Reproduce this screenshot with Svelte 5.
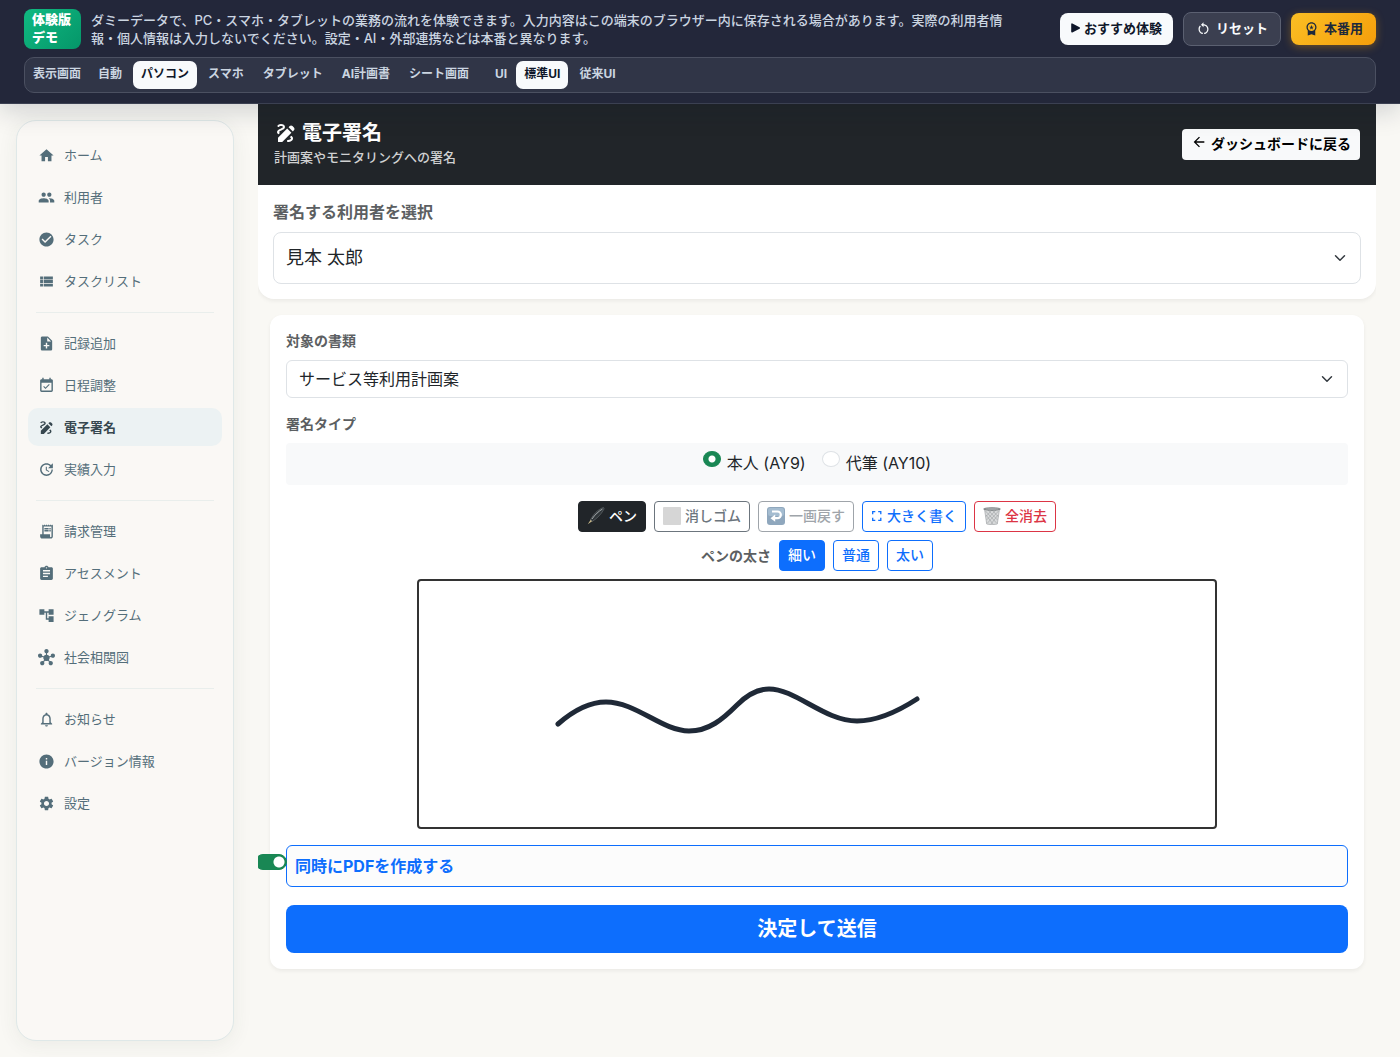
<script>
	const icons = {
		home: 'M10 20v-6h4v6h5v-8h3L12 3 2 12h3v8z',
		group:
			'M16 11c1.66 0 2.99-1.34 2.99-3S17.66 5 16 5c-1.66 0-3 1.34-3 3s1.34 3 3 3zm-8 0c1.66 0 2.99-1.34 2.99-3S9.66 5 8 5C6.34 5 5 6.34 5 8s1.34 3 3 3zm0 2c-2.33 0-7 1.17-7 3.5V19h14v-2.5c0-2.33-4.67-3.5-7-3.5zm8 0c-.29 0-.62.02-.97.05 1.16.84 1.97 1.97 1.97 3.45V19h6v-2.5c0-2.33-4.67-3.5-7-3.5z',
		check:
			'M12 2C6.48 2 2 6.48 2 12s4.48 10 10 10 10-4.48 10-10S17.52 2 12 2zm-2 15l-5-5 1.41-1.41L10 14.17l7.59-7.59L19 8l-9 9z',
		list: 'M3 14h4v-4H3v4zm0 5h4v-4H3v4zM3 9h4V5H3v4zm5 5h13v-4H8v4zm0 5h13v-4H8v4zM8 5v4h13V5H8z',
		note:
			'M14 2H6c-1.1 0-1.99.9-1.99 2L4 20c0 1.1.89 2 1.99 2H18c1.1 0 2-.9 2-2V8l-6-6zm2 14h-3v3h-2v-3H8v-2h3v-3h2v3h3v2zm-3-7V3.5L18.5 9H13z',
		event:
			'M16.53 11.06L15.47 10l-4.88 4.88-2.12-2.12-1.06 1.06L10.59 17l5.94-5.94zM19 3h-1V1h-2v2H8V1H6v2H5c-1.11 0-1.99.9-1.99 2L3 19c0 1.1.89 2 2 2h14c1.1 0 2-.9 2-2V5c0-1.1-.9-2-2-2zm0 16H5V8h14v11z',
		draw:
			'M18.85 10.39l1.06-1.06c.78-.78.78-2.05 0-2.83L18.5 5.09c-.78-.78-2.05-.78-2.83 0l-1.06 1.06 4.24 4.24zm-5.66-2.83L4 16.76V21h4.24l9.19-9.19-4.24-4.25zM19 17.5c0 2.19-2.54 3.5-5 3.5-.55 0-1-.45-1-1s.45-1 1-1c1.54 0 3-.73 3-1.5 0-.47-.48-.87-1.23-1.2l1.48-1.48c1.07.63 1.75 1.47 1.75 2.68zM4.58 13.35C3.61 12.79 3 12.06 3 11c0-1.8 1.89-2.63 3.56-3.36C7.59 7.18 9 6.56 9 6c0-.41-.78-1-2-1-1.26 0-1.8.61-1.83.64-.35.41-.98.46-1.4.12-.41-.34-.49-.95-.15-1.38C3.73 4.24 4.76 3 7 3s4 1.32 4 3c0 1.87-1.93 2.72-3.64 3.47C6.42 9.88 5 10.5 5 11c0 .31.43.6 1.07.86l-1.49 1.49z',
		update:
			'M21 10.12h-6.78l2.74-2.82c-2.73-2.7-7.15-2.8-9.88-.1-2.73 2.71-2.73 7.08 0 9.79s7.15 2.71 9.88 0C18.32 15.65 19 14.08 19 12.1h2c0 1.98-.88 4.55-2.64 6.29-3.51 3.48-9.21 3.48-12.72 0-3.5-3.47-3.53-9.11-.02-12.58s9.14-3.47 12.65 0L21 3v7.12zM12.5 8v4.25l3.5 2.08-.72 1.21L11 13V8h1.5z',
		receipt:
			'M19.5 3.5L18 2l-1.5 1.5L15 2l-1.5 1.5L12 2l-1.5 1.5L9 2 7.5 3.5 6 2v14H3v3c0 1.66 1.34 3 3 3h12c1.66 0 3-1.34 3-3V2l-1.5 1.5zM19 19c0 .55-.45 1-1 1s-1-.45-1-1v-3H8V5h11v14zM9 7h6v2H9zM16 7h2v2h-2zM9 10h6v2H9zM16 10h2v2h-2z',
		assignment:
			'M19 3h-4.18C14.4 1.84 13.3 1 12 1c-1.3 0-2.4.84-2.82 2H5c-1.1 0-2 .9-2 2v14c0 1.1.9 2 2 2h14c1.1 0 2-.9 2-2V5c0-1.1-.9-2-2-2zm-7 0c.55 0 1 .45 1 1s-.45 1-1 1-1-.45-1-1 .45-1 1-1zm2 14H7v-2h7v2zm3-4H7v-2h10v2zm0-4H7V7h10v2z',
		tree: 'M22 11V3h-7v3H9V3H2v8h7V8h2v10h4v3h7v-8h-7v3h-2V8h2v3z',
		hub:
			'M8.4 18.2C8.78 18.7 9 19.32 9 20c0 1.66-1.34 3-3 3s-3-1.34-3-3 1.34-3 3-3c.44 0 .85.09 1.23.26l1.41-1.77c-.92-1.03-1.29-2.39-1.09-3.69l-2.03-.68C4.98 11.95 4.06 12.5 3 12.5c-1.66 0-3-1.34-3-3s1.34-3 3-3 3 1.34 3 3c0 .07 0 .14-.01.21l2.03.68c.64-1.21 1.82-2.09 3.22-2.32V5.91C9.96 5.57 9 4.4 9 3c0-1.66 1.34-3 3-3s3 1.34 3 3c0 1.4-.96 2.57-2.25 2.91v2.16c1.4.23 2.58 1.11 3.22 2.32l2.03-.68C18 9.64 18 9.57 18 9.5c0-1.66 1.34-3 3-3s3 1.34 3 3-1.34 3-3 3c-1.06 0-1.98-.55-2.52-1.37l-2.03.68c.2 1.29-.16 2.65-1.09 3.69l1.41 1.77C17.15 17.09 17.56 17 18 17c1.66 0 3 1.34 3 3s-1.34 3-3 3-3-1.34-3-3c0-.68.22-1.3.6-1.8l-1.41-1.77c-1.35.75-3.01.76-4.37 0L8.4 18.2z',
		bell:
			'M12 22c1.1 0 2-.9 2-2h-4c0 1.1.89 2 2 2zm6-6v-5c0-3.07-1.64-5.64-4.5-6.32V4c0-.83-.67-1.5-1.5-1.5s-1.5.67-1.5 1.5v.68C7.63 5.36 6 7.92 6 11v5l-2 2v1h16v-1l-2-2zm-2 1H8v-6c0-2.48 1.51-4.5 4-4.5s4 2.02 4 4.5v6z',
		info:
			'M12 2C6.48 2 2 6.48 2 12s4.48 10 10 10 10-4.48 10-10S17.52 2 12 2zm1 15h-2v-6h2v6zm0-8h-2V7h2v2z',
		settings:
			'M19.14 12.94c.04-.3.06-.61.06-.94 0-.32-.02-.64-.07-.94l2.03-1.58c.18-.14.23-.41.12-.61l-1.92-3.32c-.12-.22-.37-.29-.59-.22l-2.39.96c-.5-.38-1.03-.7-1.62-.94l-.36-2.54c-.04-.24-.24-.41-.48-.41h-3.84c-.24 0-.43.17-.47.41l-.36 2.54c-.59.24-1.13.57-1.62.94l-2.39-.96c-.22-.08-.47 0-.59.22L2.74 8.87c-.12.21-.08.47.12.61l2.03 1.58c-.05.3-.09.63-.09.94s.02.64.07.94l-2.03 1.58c-.18.14-.23.41-.12.61l1.92 3.32c.12.22.37.29.59.22l2.39-.96c.5.38 1.03.7 1.62.94l.36 2.54c.05.24.24.41.48.41h3.84c.24 0 .44-.17.47-.41l.36-2.54c.59-.24 1.13-.56 1.62-.94l2.39.96c.22.08.47 0 .59-.22l1.92-3.32c.12-.22.07-.47-.12-.61l-2.01-1.58zM12 15.6c-1.98 0-3.6-1.62-3.6-3.6s1.62-3.6 3.6-3.6 3.6 1.62 3.6 3.6-1.62 3.6-3.6 3.6z',
		restart:
			'M12 5V2L8 6l4 4V7c3.31 0 6 2.69 6 6 0 2.97-2.17 5.43-5 5.91v2.02c3.95-.49 7-3.85 7-7.93 0-4.42-3.58-8-8-8zm-6 8c0-1.65.67-3.15 1.76-4.24L6.34 7.34C4.9 8.79 4 10.79 4 13c0 4.08 3.05 7.44 7 7.93v-2.02c-2.83-.48-5-2.94-5-5.91z',
		premium:
			'M9.68 13.69L12 11.93l2.31 1.76-.88-2.85L15.75 9h-2.84L12 6.19 11.09 9H8.25l2.31 1.84-.88 2.85zM20 10c0-4.42-3.58-8-8-8s-8 3.58-8 8c0 2.03.76 3.87 2 5.28V23l6-2 6 2v-7.72c1.24-1.41 2-3.25 2-5.28zm-8-6c3.31 0 6 2.69 6 6s-2.69 6-6 6-6-2.69-6-6 2.69-6 6-6z',
		back: 'M20 11H7.83l5.59-5.59L12 4l-8 8 8 8 1.41-1.41L7.83 13H20v-2z'
	};

	const navGroups = [
		[
			{ icon: 'home', label: 'ホーム' },
			{ icon: 'group', label: '利用者' },
			{ icon: 'check', label: 'タスク' },
			{ icon: 'list', label: 'タスクリスト' }
		],
		[
			{ icon: 'note', label: '記録追加' },
			{ icon: 'event', label: '日程調整' },
			{ icon: 'draw', label: '電子署名' },
			{ icon: 'update', label: '実績入力' }
		],
		[
			{ icon: 'receipt', label: '請求管理' },
			{ icon: 'assignment', label: 'アセスメント' },
			{ icon: 'tree', label: 'ジェノグラム' },
			{ icon: 'hub', label: '社会相関図' }
		],
		[
			{ icon: 'bell', label: 'お知らせ' },
			{ icon: 'info', label: 'バージョン情報' },
			{ icon: 'settings', label: '設定' }
		]
	];

	const screens = ['自動', 'パソコン', 'スマホ', 'タブレット', 'AI計画書', 'シート画面'];
	const uis = ['標準UI', '従来UI'];
	const widths = ['細い', '普通', '太い'];

	let page = $state('電子署名');
	let screen = $state('パソコン');
	let ui = $state('標準UI');
	let tool = $state('pen');
	let width = $state('細い');
	let signer = $state('AY9');
	let makePdf = $state(true);
</script>

{#snippet icon(name)}
	<svg class="icon" viewBox="0 0 24 24" aria-hidden="true"><path d={icons[name]} /></svg>
{/snippet}

<header class="demo-bar">
	<div class="demo-bar__top">
		<strong class="demo-bar__badge">体験版<br />デモ</strong>
		<p class="demo-bar__text">
			ダミーデータで、PC・スマホ・タブレットの業務の流れを体験できます。入力内容はこの端末のブラウザー内に保存される場合があります。実際の利用者情報・個人情報は入力しないでください。設定・AI・外部連携などは本番と異なります。
		</p>
		<div class="demo-bar__actions">
			<button class="demo-button demo-button--tour">
				<svg class="play" viewBox="0 0 9 10" aria-hidden="true">
					<path d="M1 1.2v7.6L8.2 5z" stroke-width="1.6" stroke-linejoin="round" />
				</svg>
				おすすめ体験
			</button>
			<button class="demo-button demo-button--reset">{@render icon('restart')}リセット</button>
			<button class="demo-button demo-button--live">{@render icon('premium')}本番用</button>
		</div>
	</div>
	<div class="tabs">
		<span class="tabs__label">表示画面</span>
		{#each screens as name}
			<button class="tab" class:active={screen === name} onclick={() => (screen = name)}>{name}</button>
		{/each}
		<span class="tabs__label tabs__label--ui">UI</span>
		{#each uis as name}
			<button class="tab" class:active={ui === name} onclick={() => (ui = name)}>{name}</button>
		{/each}
	</div>
</header>

<div class="layout">
	<nav class="sidebar">
		{#each navGroups as group, i}
			{#if i > 0}<hr />{/if}
			{#each group as item}
				<a
					class="nav-link"
					class:active={page === item.label}
					href="#{item.icon}"
					onclick={() => (page = item.label)}
				>
					{@render icon(item.icon)}{item.label}
				</a>
			{/each}
		{/each}
	</nav>

	<main>
		<section class="client">
			<div class="client__header">
				<div>
					<h1>{@render icon('draw')}電子署名</h1>
					<p>計画案やモニタリングへの署名</p>
				</div>
				<a class="back" href="#dashboard">{@render icon('back')}ダッシュボードに戻る</a>
			</div>
			<div class="client__body">
				<label for="client">署名する利用者を選択</label>
				<select id="client" class="select select--large">
					<option>見本 太郎</option>
				</select>
			</div>
		</section>

		<form class="card" onsubmit={(event) => event.preventDefault()}>
			<label class="field-label" for="document">対象の書類</label>
			<select id="document" class="select">
				<option>サービス等利用計画案</option>
			</select>

			<div class="field-label" id="sign-type">署名タイプ</div>
			<div class="radios" role="radiogroup" aria-labelledby="sign-type">
				<label><input type="radio" value="AY9" bind:group={signer} />本人 (AY9)</label>
				<label><input type="radio" value="AY10" bind:group={signer} />代筆 (AY10)</label>
			</div>

			<div class="toolbar">
				<button type="button" class="btn dark" class:active={tool === 'pen'} onclick={() => (tool = 'pen')}>
					<svg class="emoji" viewBox="0 0 18 18" aria-hidden="true">
						<path d="M.8 17.2l3-4.6 1.6 1.4z" fill="#c9b98a" />
						<path
							d="M3.6 12.8C6 7.500 11 2.500 15.800.7c1.300-.4 1.600.7.9 1.900C14 7.500 10 11.500 5.400 14.300z"
							fill="#30363a"
							stroke="#7b8184"
							stroke-width=".5"
						/>
						<path d="M5 12C8 7.5 12 4 15.500 2" stroke="#c2c6c8" stroke-width=".8" fill="none" />
					</svg>
					ペン
				</button>
				<button type="button" class="btn grey" class:active={tool === 'eraser'} onclick={() => (tool = 'eraser')}>
					<svg class="emoji" viewBox="0 0 18 18" aria-hidden="true">
						<rect width="18" height="18" rx="1" fill="#d6d6d6" />
					</svg>
					消しゴム
				</button>
				<button type="button" class="btn grey" disabled>
					<svg class="emoji" viewBox="0 0 18 18" aria-hidden="true">
						<rect width="18" height="18" rx="3" fill="#54799b" />
						<rect x="1" y="1" width="16" height="8" rx="2" fill="#7599b8" />
						<path d="M5 4.5h5.5a3.2 3.2 0 010 6.7H7" fill="none" stroke="#fff" stroke-width="2.2" />
						<path d="M8.2 7.5v7.3L3.5 11.2z" fill="#fff" />
					</svg>
					一画戻す
				</button>
				<button type="button" class="btn blue">
					<svg class="expand" viewBox="0 0 12 12" aria-hidden="true">
						<path d="M1.7 4.3V1.7h2.6M7.2 1.7h2.6v2.6M9.8 7.7v2.6H7.2M4.3 10.3H1.7V7.7" />
					</svg>
					大きく書く
				</button>
				<button type="button" class="btn red">
					<svg class="emoji" viewBox="0 0 18 18" aria-hidden="true">
						<path d="M1.5 2h15l-2.2 15q-5.3 1.5-10.6 0z" fill="#d8dadb" />
						<path
							d="M2.5 4l11 12M5 3l9.500 10M9 3l6 6.500M3 8l7 9M15.500 4L4.500 16M13 3L3.500 13M9 3L3 9.500M15 8l-7 9"
							stroke="#909496"
							stroke-width=".5"
						/>
						<path d="M1.5 2l2.2 15q5.3 1.5 10.6 0l2.2-15" fill="none" stroke="#a0a4a6" stroke-width=".7" />
						<ellipse cx="9" cy="2" rx="8.3" ry="1.2" fill="#b4b8ba" stroke="#6f7577" stroke-width=".9" />
					</svg>
					全消去
				</button>
			</div>
			<div class="toolbar">
				<span class="toolbar__label">ペンの太さ</span>
				{#each widths as name}
					<button type="button" class="btn blue" class:active={width === name} onclick={() => (width = name)}>
						{name}
					</button>
				{/each}
			</div>

			<div class="pad">
				<svg viewBox="0 0 796 246" role="img" aria-label="署名">
					<path
						d="M139 143C155 129 170 121 187 121C217 121 243 150 270 150C290 150 304 138 318 124C328 114 338 108 350 108C377 108 405 140 438 140C458 140 478 131 498 118"
					/>
				</svg>
			</div>

			<div class="switch">
				<input id="make-pdf" type="checkbox" role="switch" bind:checked={makePdf} />
				<label for="make-pdf">同時にPDFを作成する</label>
			</div>

			<button class="submit">決定して送信</button>
		</form>
	</main>
</div>

<style>
	:global(body) {
		background: #f9f8f4;
		color: #212529;
		font-family: Inter, 'Noto Sans CJK JP', sans-serif;
		font-size: 16px;
		line-height: 24px;
	}

	:global(*) {
		box-sizing: border-box;
	}

	button,
	select {
		color: inherit;
		font: inherit;
		cursor: pointer;
	}

	a {
		text-decoration: none;
	}

	.icon {
		flex: none;
		width: 17px;
		height: 17px;
		fill: currentColor;
	}

	/* Demo bar */

	.demo-bar {
		position: relative;
		z-index: 2;
		padding: 9px 24px 10px;
		border-bottom: 1px solid #3b4052;
		background: #23273a;
		box-shadow: 0 8px 24px rgb(15 23 42 / 0.16);
		color: #cbd5e1;
	}

	.demo-bar__top {
		display: flex;
		align-items: center;
		gap: 10px;
	}

	.demo-bar__badge {
		flex: none;
		padding: 1px 10px 3px 8px;
		border-radius: 8px;
		background: linear-gradient(135deg, #10b981, #059669);
		color: #fff;
		font-size: 13px;
		font-weight: 800;
		line-height: 18px;
	}

	.demo-bar__text {
		flex: 1;
		margin: 0;
		padding-right: 36px;
		font-size: 13px;
		font-weight: 500;
		line-height: 18px;
	}

	.demo-bar__actions {
		display: flex;
		flex: none;
		align-items: center;
		gap: 10px;
	}

	.demo-button {
		display: flex;
		align-items: center;
		gap: 5px;
		height: 32px;
		padding: 0 13px 2px;
		border: none;
		border-radius: 8px;
		font-size: 13px;
		font-weight: 700;

		& .icon {
			width: 15px;
			height: 15px;
		}
	}

	.demo-button--tour {
		gap: 4px;
		padding: 0 11px 2px;
		background: #f8fafc;
		color: #0f172a;
	}

	.play {
		width: 9px;
		height: 10px;
		fill: currentColor;
		stroke: currentColor;
	}

	.demo-button--reset {
		height: 34px;
		padding: 0 12px 2px;
		border: 1px solid #5b6071;
		background: #3b3f50;
		color: #f8fafc;
	}

	.demo-button--live {
		background: linear-gradient(135deg, #fbbf24, #f59e0b);
		box-shadow: 0 2px 8px rgb(245 158 11 / 0.35);
		color: #1e293b;
	}

	.tabs {
		display: flex;
		align-items: center;
		gap: 3px;
		margin-top: 8px;
		padding: 3px 8px;
		border: 1px solid #4b5061;
		border-radius: 10px;
		background: #303547;
		font-size: 12px;
		font-weight: 700;
		line-height: 24px;
	}

	.tabs__label {
		padding: 0 6px 2px 0;
	}

	.tabs__label--ui {
		padding: 0 6px 2px 15px;
	}

	.tab {
		padding: 1px 8px 3px;
		border: none;
		border-radius: 7px;
		background: transparent;

		&.active {
			background: #f8fafc;
			color: #0f172a;
		}
	}

	/* Sidebar */

	.layout {
		display: flex;
		gap: 24px;
		min-height: calc(100vh - 104px);
		padding: 0 24px 0 16px;
	}

	.sidebar {
		display: flex;
		flex: none;
		flex-direction: column;
		gap: 4px;
		width: 218px;
		margin: 16px 0;
		padding: 15px 11px;
		border: 1px solid #dfe8e8;
		border-radius: 20px;
		background: #faf8f5;
		box-shadow: 0 4px 20px rgb(60 70 60 / 0.07);

		& hr {
			width: calc(100% - 16px);
			height: 1px;
			margin: 8px 8px 7px;
			border: none;
			background: #e9eeec;
		}
	}

	.nav-link {
		display: flex;
		align-items: center;
		gap: 9px;
		height: 38px;
		padding: 0 10px;
		border-radius: 10px;
		color: #546e7a;
		font-size: 13px;

		&.active {
			background: #ecf2f3;
			color: #37474f;
			font-weight: 700;
		}
	}

	/* Client */

	main {
		flex: 1;
		min-width: 0;
		overflow: hidden;
		padding-bottom: 24px;
	}

	.client {
		border-radius: 0 0 16px 16px;
		background: #fff;
		box-shadow: 0 2px 4px rgb(0 0 0 / 0.06);
	}

	.client__header {
		display: flex;
		align-items: center;
		justify-content: space-between;
		padding: 16px;
		background: #212529;
		color: #fff;

		& h1 {
			display: flex;
			align-items: center;
			gap: 4px;
			margin: 0;
			font-size: 20px;
			line-height: 26px;
		}

		& h1 .icon {
			width: 24px;
			height: 24px;
		}

		& p {
			margin: 0;
			color: #d0d1d2;
			font-size: 13px;
			font-weight: 500;
			line-height: 23px;
		}
	}

	.back {
		display: flex;
		align-items: center;
		gap: 4px;
		height: 31px;
		padding: 0 9px 1px;
		border-radius: 4px;
		background: #f8f9fa;
		color: #000;
		font-size: 14px;
		font-weight: 700;

		& .icon {
			width: 16px;
			height: 16px;
			margin-bottom: 4px;
		}
	}

	.client__body {
		padding: 15px;

		& label {
			display: block;
			margin-bottom: 8px;
			color: #5c5f62;
			font-weight: 700;
		}
	}

	.select {
		display: block;
		width: 100%;
		height: 38px;
		padding: 0 36px 0 12px;
		border: 1px solid #dee2e6;
		border-radius: 6px;
		appearance: none;
		background: #fff
			url("data:image/svg+xml,%3Csvg xmlns='http://www.w3.org/2000/svg' viewBox='0 0 16 16'%3E%3Cpath fill='none' stroke='%23343a40' stroke-linecap='round' stroke-linejoin='round' stroke-width='2' d='m2 5 6 6 6-6'/%3E%3C/svg%3E")
			no-repeat right 14px center / 12px 12px;
	}

	.select--large {
		height: 52px;
		border-radius: 8px;
		font-size: 18px;
	}

	/* Signature card */

	.card {
		margin: 16px 12px 0;
		padding: 16px;
		border-radius: 12px;
		background: #fff;
		box-shadow: 0 2px 4px rgb(0 0 0 / 0.06);
	}

	.field-label {
		display: block;
		padding-bottom: 1px;
		margin-bottom: 8px;
		color: #5c5f62;
		font-size: 14px;
		font-weight: 700;
		line-height: 20px;
	}

	.select + .field-label {
		margin-top: 16px;
	}

	.radios {
		display: flex;
		justify-content: center;
		gap: 16px;
		margin-bottom: 16px;
		padding: 8px;
		border-radius: 4px;
		background: #f8f9fa;

		& label {
			display: flex;
			gap: 6px;
			padding-bottom: 2px;
			line-height: 24px;
		}

		& input {
			width: 18px;
			height: 16px;
			margin: 0;
			border: 1px solid #dee2e6;
			border-radius: 50%;
			appearance: none;
			background: #fff;
		}

		& input:checked {
			border-color: #198754;
			background: #198754 radial-gradient(circle, #fff 3px, transparent 4px);
		}
	}

	.toolbar {
		display: flex;
		flex-wrap: wrap;
		align-items: center;
		justify-content: center;
		gap: 8px;
		margin-bottom: 8px;
	}

	.toolbar__label {
		color: #5c5f62;
		font-size: 14px;
		font-weight: 700;
	}

	.btn {
		--color: #0d6efd;

		display: flex;
		align-items: center;
		gap: 4px;
		height: 31px;
		padding: 0 8px 1px;
		border: 1px solid var(--color);
		border-radius: 4px;
		background: #fff;
		color: var(--color);
		font-size: 14px;
		font-weight: 500;

		&.dark {
			--color: #212529;
		}

		&.grey {
			--color: #6c757d;
		}

		&.red {
			--color: #dc3545;
		}

		&.active {
			background: var(--color);
			color: #fff;
		}

		&:disabled {
			opacity: 0.65;
		}
	}

	.emoji {
		width: 18px;
		height: 18px;
	}

	.expand {
		width: 12px;
		height: 12px;
		fill: none;
		stroke: currentColor;
		stroke-width: 1.3px;
	}

	.pad {
		max-width: 800px;
		margin: 0 auto 16px;
		border: 2px solid #333;
		border-radius: 4px;
		background: #fff;

		& svg {
			display: block;
			width: 100%;
		}

		& path {
			fill: none;
			stroke: #1f2937;
			stroke-width: 5px;
			stroke-linecap: round;
		}
	}

	.switch {
		display: flex;
		margin-bottom: 18px;
		padding: 8px;
		border: 1px solid #0d6efd;
		border-radius: 6px;
		background: #fcfcfc;

		& label {
			color: #0d6efd;
			font-weight: 700;
		}

		& input {
			flex: none;
			width: 32px;
			height: 16px;
			margin: 0 8px 0 -40px;
			border: 1px solid #198754;
			border-radius: 8px;
			appearance: none;
			background: #198754 radial-gradient(circle at 23px 7px, #fff 5px, transparent 6px);
		}

		& input:not(:checked) {
			border-color: #dee2e6;
			background: #fff radial-gradient(circle at 7px 7px, #bfbfbf 5px, transparent 6px);
		}
	}

	.submit {
		display: block;
		width: 100%;
		height: 48px;
		border: none;
		border-radius: 8px;
		background: #0d6efd;
		color: #fff;
		font-size: 20px;
		font-weight: 700;
	}
</style>
